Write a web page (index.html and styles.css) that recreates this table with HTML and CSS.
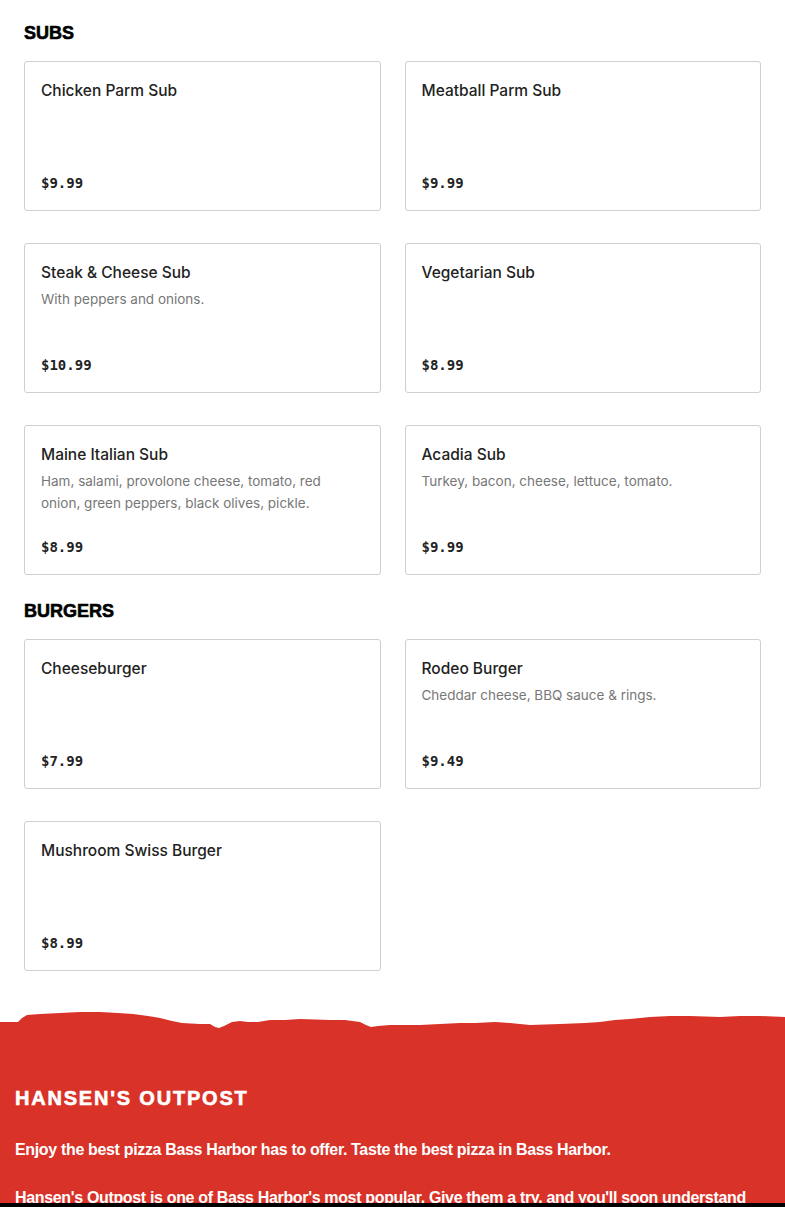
FILE: index.html
```html
<!DOCTYPE html>
<html lang="en">
<head>
<meta charset="utf-8">
<title>Hansen's Outpost Menu</title>
<link rel="stylesheet" href="styles.css">
</head>
<body>
<main class="menu">
  <section class="section">
    <h2 class="section-title">SUBS</h2>
    <div class="grid">
      <div class="card"><h3 class="card-title">Chicken Parm Sub</h3><div class="price">$9.99</div></div>
      <div class="card"><h3 class="card-title">Meatball Parm Sub</h3><div class="price">$9.99</div></div>
      <div class="card"><h3 class="card-title">Steak &amp; Cheese Sub</h3><p class="desc">With peppers and onions.</p><div class="price">$10.99</div></div>
      <div class="card"><h3 class="card-title">Vegetarian Sub</h3><div class="price">$8.99</div></div>
      <div class="card"><h3 class="card-title">Maine Italian Sub</h3><p class="desc">Ham, salami, provolone cheese, tomato, red onion, green peppers, black olives, pickle.</p><div class="price">$8.99</div></div>
      <div class="card"><h3 class="card-title">Acadia Sub</h3><p class="desc">Turkey, bacon, cheese, lettuce, tomato.</p><div class="price">$9.99</div></div>
    </div>
  </section>
  <section class="section">
    <h2 class="section-title">BURGERS</h2>
    <div class="grid">
      <div class="card"><h3 class="card-title">Cheeseburger</h3><div class="price">$7.99</div></div>
      <div class="card"><h3 class="card-title">Rodeo Burger</h3><p class="desc">Cheddar cheese, BBQ sauce &amp; rings.</p><div class="price">$9.49</div></div>
      <div class="card"><h3 class="card-title">Mushroom Swiss Burger</h3><div class="price">$8.99</div></div>
    </div>
  </section>
</main>
<footer class="footer">
  <svg class="torn" viewBox="0 0 785 22" preserveAspectRatio="none" aria-hidden="true">
    <path fill="#d93228" d="M0 14 L18 14 L22 10 L27 7 L40 6 L60 5 L80 4 L100 4 L118 5 L133 6 L148 8 L160 10 L172 13 L182 15 L200 16 L210 16 L215 19 L219 20 L224 18 L232 14 L240 13 L248 14 L258 14 L270 12 L285 12 L300 11 L330 12 L345 12 L360 14 L366 17 L371 19 L378 18 L390 17 L405 17 L420 17 L440 16 L460 15 L475 15 L495 14 L510 15 L530 17 L560 16 L585 15 L600 14 L615 12 L630 11 L650 9 L670 8 L690 8 L720 9 L740 8 L760 8 L785 9 L785 22 L0 22 Z"/>
  </svg>
  <div class="footer-body">
    <h2 class="footer-title">HANSEN'S OUTPOST</h2>
    <p class="footer-text">Enjoy the best pizza Bass Harbor has to offer. Taste the best pizza in Bass Harbor.</p>
    <p class="footer-text">Hansen's Outpost is one of Bass Harbor's most popular. Give them a try, and you'll soon understand why.</p>
  </div>
</footer>
<div class="bottom-bar"></div>
</body>
</html>
```

FILE: styles.css
```css
* { box-sizing: border-box; }
html, body { margin: 0; padding: 0; }
body {
  background: #fff;
  font-family: Inter, "Liberation Sans", sans-serif;
  color: #222;
  overflow: hidden;
}
.menu {
  padding: 21px 24px 0;
}
.section { margin-bottom: 24px; }
.section-title {
  margin: 0 0 16px;
  font-family: "Liberation Sans", Arial, sans-serif;
  font-weight: 900;
  font-size: 18px;
  line-height: 24px;
  color: #000;
  -webkit-text-stroke: 0.6px #000;
}
.grid {
  display: grid;
  grid-template-columns: 1fr 1fr;
  column-gap: 24px;
  row-gap: 32px;
}
.card {
  display: flex;
  flex-direction: column;
  height: 150px;
  padding: 17px 16px 15px;
  border: 1px solid #cfcfcf;
  border-radius: 3px;
  background: #fff;
}
.card-title {
  margin: 0;
  font-size: 15.5px;
  font-weight: 500;
  line-height: 24px;
  color: #222;
}
.desc {
  margin: 3px 0 0;
  font-size: 13.5px;
  line-height: 22px;
  color: #777;
}
.price {
  margin-top: auto;
  font-family: "DejaVu Sans Mono", "Liberation Mono", monospace;
  font-weight: 700;
  font-size: 14px;
  line-height: 24px;
  color: #222;
}
.footer {
  margin-top: 37px;
}
.torn {
  display: block;
  width: 100%;
  height: 22px;
}
.footer-body {
  background: #d93228;
  padding: 57px 15px 40px;
  color: #fff;
  margin-top: -1px;
}
.footer-title {
  margin: 0 0 28px;
  font-family: "Liberation Sans", Arial, sans-serif;
  font-weight: 900;
  font-size: 20px;
  letter-spacing: 1.8px;
  line-height: 24px;
  -webkit-text-stroke: 0.6px #fff;
}
.footer-text {
  margin: 0 0 24px;
  font-family: "Liberation Sans", Arial, sans-serif;
  font-size: 16px;
  line-height: 24px;
  font-weight: 700;
  letter-spacing: -0.34px;
}
.bottom-bar {
  position: fixed;
  left: 0;
  right: 0;
  bottom: 0;
  height: 4px;
  background: #000;
}
```
